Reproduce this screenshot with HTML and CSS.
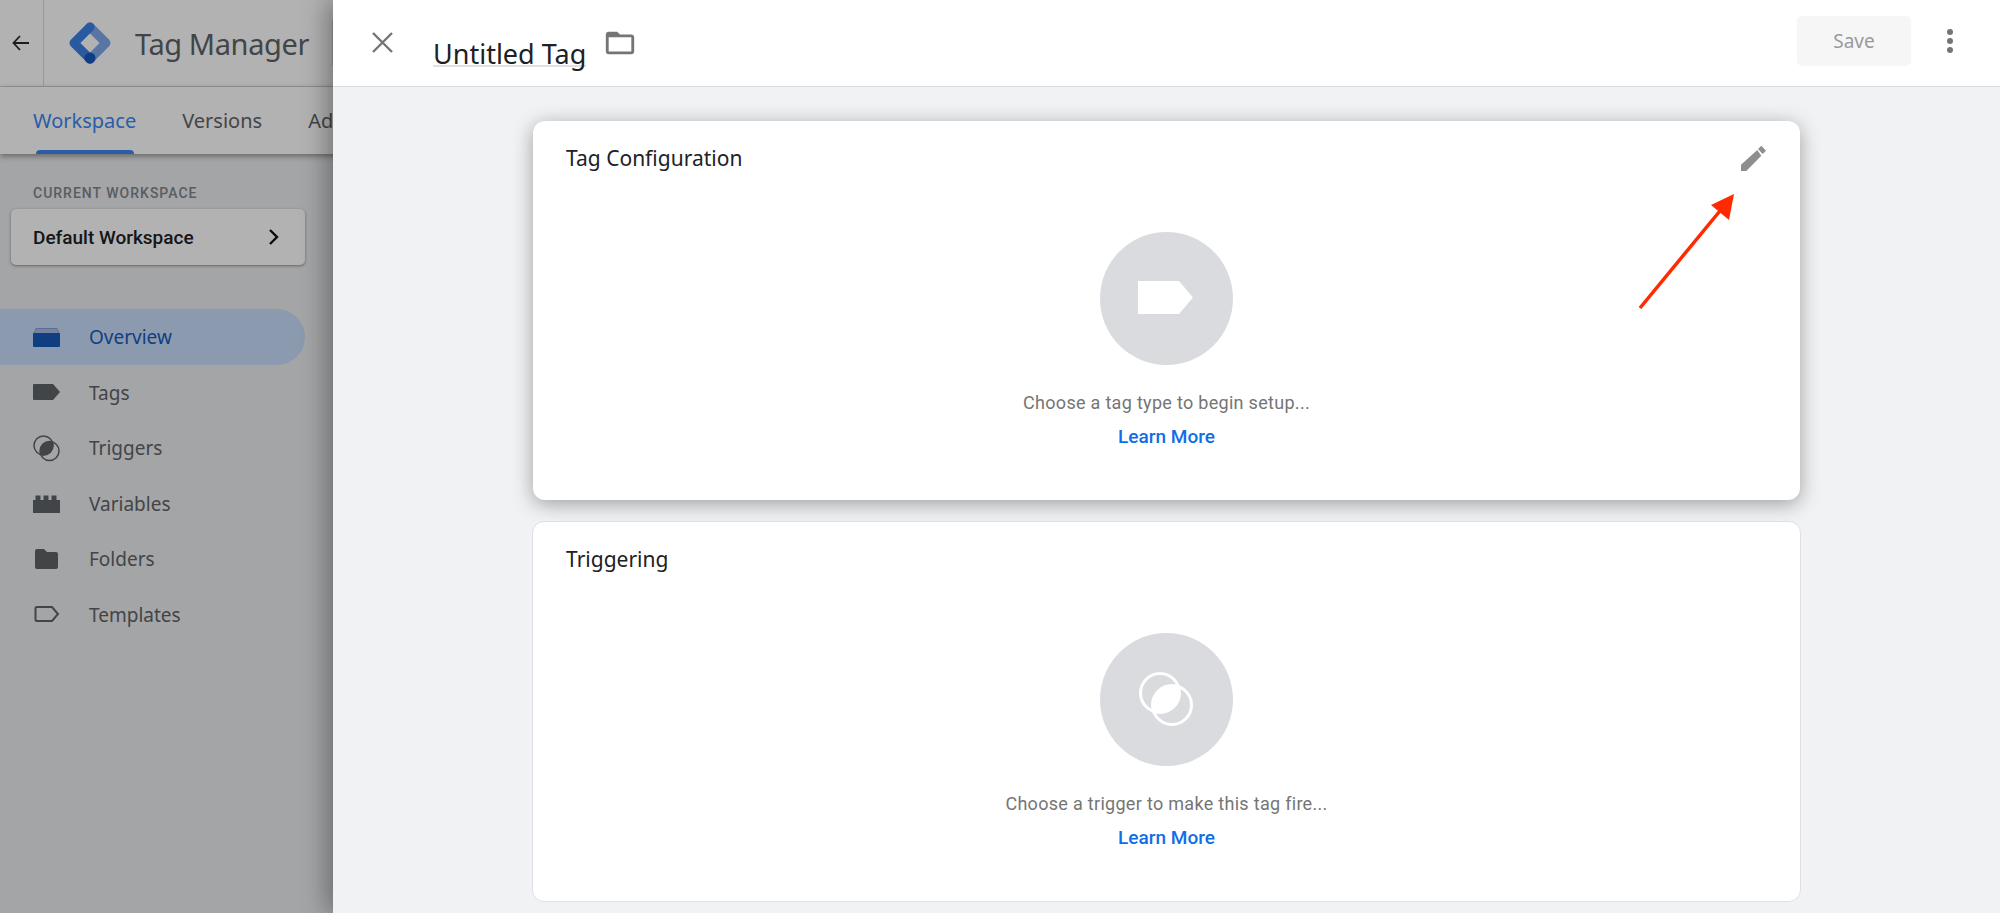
FILE: index.html
```html
<!DOCTYPE html>
<html lang="en">
<head>
    <meta charset="UTF-8">
    <title>Tag Manager — Untitled Tag</title>
    <link rel="stylesheet" href="styles.css">
</head>
<body>
    <div class="app">
        <div class="topbar">
            <div class="back">
                <svg width="18" height="18" viewBox="0 0 18 18"><path d="M8 2 1.5 9 8 16M1.5 9H17" fill="none" stroke="#2a2a2a" stroke-width="1.8"/></svg>
            </div>
            <svg class="logo" width="42" height="42" viewBox="0 0 42 42">
                <path d="M21 5 37 21 21 37" fill="none" stroke="#7fa8ea" stroke-width="9" stroke-linecap="round" stroke-linejoin="round"/>
                <path d="M21 5 5 21 21 37" fill="none" stroke="#3c82e6" stroke-width="9" stroke-linecap="round" stroke-linejoin="round"/>
                <circle cx="21" cy="36" r="5.5" fill="#185abc"/>
            </svg>
            <span class="product">Tag Manager</span>
            <span class="top-divider"></span>
        </div>
        <div class="tabs">
            <span class="tab active">Workspace</span>
            <span class="tab">Versions</span>
            <span class="tab">Admin</span>
        </div>
        <div class="sidebar">
            <div class="ws-label">CURRENT WORKSPACE</div>
            <div class="ws-card">
                <span>Default Workspace</span>
                <svg width="14" height="18" viewBox="0 0 14 18"><path d="M3 2l7 7-7 7" fill="none" stroke="#111" stroke-width="2.4"/></svg>
            </div>
            <div class="nav">
                <div class="nav-item active">
                    <svg class="nav-icon" width="27" height="27" viewBox="0 0 27 27"><path d="M3 4h21l3 6H0z" fill="#7d9bd8"/><path d="M3.5 5h20l2 4h-24z" fill="#a9bde6"/><path d="M1 9h25a1 1 0 0 1 1 1v12a1 1 0 0 1-1 1H1a1 1 0 0 1-1-1V10a1 1 0 0 1 1-1z" fill="#185abc"/></svg>
                    <span>Overview</span>
                </div>
                <div class="nav-item">
                    <svg class="nav-icon" width="27" height="27" viewBox="0 0 27 27"><path d="M1 5h19l7 8-7 8H1a1 1 0 0 1-1-1V6a1 1 0 0 1 1-1z" fill="#5f6368"/></svg>
                    <span>Tags</span>
                </div>
                <div class="nav-item">
                    <svg class="nav-icon" width="27" height="27" viewBox="0 0 27 27">
                        <defs><clipPath id="nav-clip"><circle cx="10.5" cy="10.5" r="10"/></clipPath></defs>
                        <circle cx="16.5" cy="16" r="9.5" fill="#5f6368" clip-path="url(#nav-clip)"/>
                        <circle cx="10.5" cy="10.5" r="9.5" fill="none" stroke="#5f6368" stroke-width="1.5"/>
                        <circle cx="16.5" cy="16" r="9.5" fill="none" stroke="#5f6368" stroke-width="1.5"/>
                    </svg>
                    <span>Triggers</span>
                </div>
                <div class="nav-item">
                    <svg class="nav-icon" width="27" height="27" viewBox="0 0 27 27"><path d="M0 10h2.500V5.500h5V10h3V5.500h5V10h3V5.500h5V10H27v13H0z" fill="#5f6368"/></svg>
                    <span>Variables</span>
                </div>
                <div class="nav-item">
                    <svg class="nav-icon" width="27" height="27" viewBox="0 0 27 27"><path d="M4 3h7l3 3h9a2 2 0 0 1 2 2v13a2 2 0 0 1-2 2H4a2 2 0 0 1-2-2V5a2 2 0 0 1 2-2z" fill="#5f6368"/></svg>
                    <span>Folders</span>
                </div>
                <div class="nav-item">
                    <svg class="nav-icon" width="27" height="27" viewBox="0 0 27 27"><path d="M4 6h15l6 7-6 7H4a1.500 1.500 0 0 1-1.500-1.500v-11A1.500 1.500 0 0 1 4 6z" fill="none" stroke="#5f6368" stroke-width="2"/></svg>
                    <span>Templates</span>
                </div>
            </div>
        </div>
    </div>

    <div class="scrim"></div>

    <div class="panel">
        <div class="panel-head">
            <svg class="close" width="21" height="21" viewBox="0 0 21 21"><path d="M1 1l19 19M20 1 1 20" stroke="#757575" stroke-width="2.400"/></svg>
            <span class="tag-name">Untitled Tag</span>
            <svg class="folder" width="34" height="34" viewBox="0 0 24 24"><path d="M20 6h-8l-2-2H4c-1.100 0-2 .9-2 2v12c0 1.100.9 2 2 2h16c1.100 0 2-.9 2-2V8c0-1.100-.9-2-2-2zm0 12H4V8h16v10z" fill="#757575"/></svg>
            <span class="head-space"></span>
            <button class="save">Save</button>
            <svg class="more" width="8" height="26" viewBox="0 0 8 26"><circle cx="4" cy="4" r="3" fill="#757575"/><circle cx="4" cy="13" r="3" fill="#757575"/><circle cx="4" cy="22" r="3" fill="#757575"/></svg>
        </div>
        <div class="panel-body">
            <div class="card raised">
                <div class="card-head">
                    <span class="card-title">Tag Configuration</span>
                    <svg width="26" height="26" viewBox="0 0 26 26"><path d="M0 26v-6.300L16.300 5l4 5.700L5.300 26zM17 4 20.300.7 25 5.700 21.700 9z" fill="#8e8e8e"/></svg>
                </div>
                <svg class="badge" width="133" height="133" viewBox="0 0 133 133"><circle cx="66.500" cy="66.500" r="66.500" fill="#dadbdf"/><path d="M38 49h41l14 16.500L79 82H38z" fill="#fff"/></svg>
                <div class="hint">Choose a tag type to begin setup...</div>
                <a class="learn">Learn More</a>
                <svg class="callout" width="110" height="130" viewBox="0 0 110 130"><path d="M4 124 88 22" stroke="#ff2a00" stroke-width="3.500"/><path d="M98 10 93 36 75 21z" fill="#ff2a00"/></svg>
            </div>
            <div class="card outlined">
                <div class="card-head">
                    <span class="card-title">Triggering</span>
                </div>
                <svg class="badge" width="133" height="133" viewBox="0 0 133 133">
                    <defs><clipPath id="badge-clip"><circle cx="60" cy="60" r="19.500"/></clipPath></defs>
                    <circle cx="66.500" cy="66.500" r="66.500" fill="#dadbdf"/>
                    <circle cx="72" cy="72" r="19.500" fill="#fff" clip-path="url(#badge-clip)"/>
                    <circle cx="60" cy="60" r="19.500" fill="none" stroke="#fff" stroke-width="3"/>
                    <circle cx="72" cy="72" r="19.500" fill="none" stroke="#fff" stroke-width="3"/>
                </svg>
                <div class="hint">Choose a trigger to make this tag fire...</div>
                <a class="learn">Learn More</a>
            </div>
        </div>
    </div>
</body>
</html>
```
FILE: styles.css
```css
* {
    box-sizing: border-box;
}
html, body {
    height: 100%;
}
body {
    margin: 0;
    overflow: hidden;
    position: relative;
    background-color: #fff;
    font-family: Roboto, "Liberation Sans", sans-serif;
}

/* app behind the drawer */
.app {
    width: 345px;
    height: 100%;
    display: flex;
    flex-direction: column;
    overflow: hidden;
}
.topbar {
    height: 87px;
    flex: none;
    display: flex;
    align-items: center;
    border-bottom: 1px solid #dadce0;
    background-color: #fff;
}
.back {
    width: 44px;
    height: 86px;
    flex: none;
    display: flex;
    align-items: center;
    justify-content: center;
    padding-right: 2px;
    border-right: 1px solid #dadce0;
}
.logo {
    margin-left: 25px;
    flex: none;
}
.product {
    margin-left: 24px;
    font-family: "Noto Sans", sans-serif;
    font-size: 29px;
    letter-spacing: -0.4px;
    color: #5f6368;
    white-space: nowrap;
}
.top-divider {
    width: 1px;
    height: 46px;
    margin-left: 23px;
    flex: none;
    background-color: #dadce0;
}
.tabs {
    height: 67px;
    flex: none;
    display: flex;
    gap: 46px;
    padding-left: 33px;
    position: relative;
    z-index: 1;
    background-color: #fff;
    box-shadow: 0 2px 6px rgba(0,0,0,0.4);
    font-family: "Noto Sans", sans-serif;
    font-size: 20px;
    color: #5f6368;
}
.tab {
    position: relative;
    padding-top: 20px;
    white-space: nowrap;
}
.tab.active {
    color: #3d86f0;
}
.tab.active::after {
    content: "";
    position: absolute;
    left: 3px;
    right: 2px;
    bottom: 0;
    height: 4px;
    border-radius: 4px 4px 0 0;
    background-color: #3d86f0;
}
.sidebar {
    flex: 1;
    background-color: #ebecee;
    padding-top: 29px;
}
.ws-label {
    height: 20px;
    line-height: 20px;
    padding-left: 33px;
    font-size: 14px;
    font-weight: 500;
    letter-spacing: 1px;
    color: #80868b;
    white-space: nowrap;
}
.ws-card {
    width: 294px;
    height: 56px;
    margin: 6px 0 0 11px;
    padding: 0 24px 0 22px;
    display: flex;
    align-items: center;
    justify-content: space-between;
    border-radius: 5px;
    background-color: #fff;
    box-shadow: 0 1px 3px rgba(0,0,0,0.4);
    font-size: 19px;
    font-weight: 500;
    color: #202124;
}
.nav {
    margin-top: 44px;
}
.nav-item {
    width: 305px;
    height: 55.5px;
    display: flex;
    align-items: center;
    gap: 29px;
    padding-left: 33px;
    font-family: "Noto Sans", sans-serif;
    font-size: 19px;
    color: #5f6368;
}
.nav-item.active {
    height: 56px;
    border-radius: 0 28px 28px 0;
    background-color: #c8ddfb;
    color: #185abc;
}
.nav-icon {
    flex: none;
}

.scrim {
    position: absolute;
    inset: 0;
    z-index: 2;
    background-color: rgba(0,0,0,0.3);
}

/* tag editor drawer */
.panel {
    position: absolute;
    top: 0;
    bottom: 0;
    left: 333px;
    right: 0;
    z-index: 3;
    display: flex;
    flex-direction: column;
    background-color: #f1f2f4;
    box-shadow: -6px 0 24px rgba(0,0,0,0.35);
}
.panel-head {
    height: 87px;
    flex: none;
    display: flex;
    align-items: center;
    padding: 0 46px 0 39px;
    border-bottom: 1px solid #d9dbdf;
    background-color: #fff;
}
.close {
    flex: none;
    margin-top: -1px;
}
.tag-name {
    margin-left: 40px;
    height: 47px;
    padding-top: 23px;
    line-height: 40px;
    display: flex;
    align-items: center;
    border-bottom: 2px solid #e0e0e6;
    font-family: "Noto Sans", sans-serif;
    font-size: 27px;
    color: #202124;
    white-space: nowrap;
}
.folder {
    flex: none;
    margin-left: 17px;
}
.head-space {
    flex: 1;
}
.save {
    width: 114px;
    height: 50px;
    margin-top: -4px;
    border: none;
    border-radius: 5px;
    background-color: #f6f6f7;
    font-family: "Noto Sans", sans-serif;
    font-size: 19px;
    color: #9a9a9a;
}
.more {
    flex: none;
    margin: -4px 0 0 35px;
}
.panel-body {
    width: 1269px;
    margin: 0 auto;
    padding-top: 34px;
}
.card {
    position: relative;
    display: flex;
    flex-direction: column;
    align-items: center;
    padding: 23px 33px 51px;
    border-radius: 12px;
    background-color: #fff;
}
.card.raised {
    margin: 0 1px 21px;
    box-shadow: 0 4px 20px rgba(0,0,0,0.35);
}
.card.outlined {
    border: 1px solid #dfe0e5;
}
.card-head {
    width: 100%;
    height: 28px;
    display: flex;
    align-items: center;
    justify-content: space-between;
}
.card-title {
    font-family: "Noto Sans", sans-serif;
    font-size: 21px;
    color: #202124;
}
.badge {
    margin-top: 60px;
}
.hint {
    margin-top: 26px;
    line-height: 24px;
    font-size: 18px;
    letter-spacing: 0.3px;
    color: #757575;
}
.learn {
    margin-top: 10px;
    line-height: 24px;
    font-size: 19px;
    font-weight: 500;
    color: #0f6ee6;
}
/* red annotation arrow on top of the screenshot */
.callout {
    position: absolute;
    left: 1103px;
    top: 63px;
}
```
